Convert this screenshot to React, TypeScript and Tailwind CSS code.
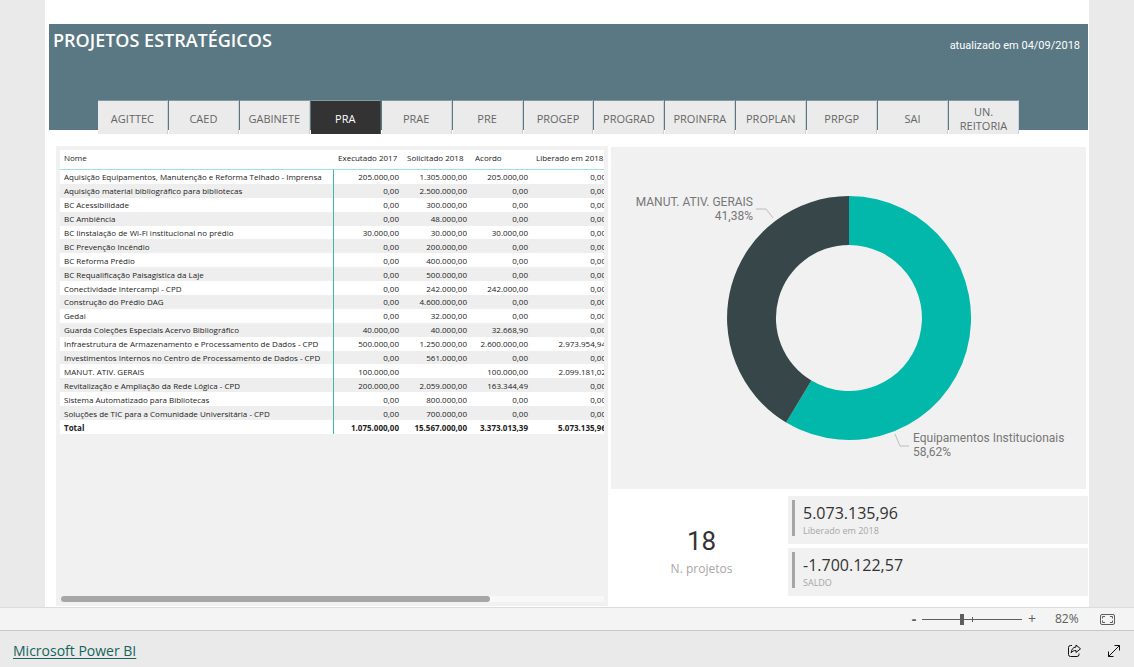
import React, { useState } from 'react'

const tabs = ['AGITTEC', 'CAED', 'GABINETE', 'PRA', 'PRAE', 'PRE', 'PROGEP', 'PROGRAD', 'PROINFRA', 'PROPLAN', 'PRPGP', 'SAI', 'UN. REITORIA']

const columns = ['Nome', 'Executado 2017', 'Solicitado 2018', 'Acordo', 'Liberado em 2018']

const projects = [
    ['Aquisição Equipamentos, Manutenção e Reforma Telhado - Imprensa', '205.000,00', '1.305.000,00', '205.000,00', '0,00'],
    ['Aquisição material bibliográfico para bibliotecas', '0,00', '2.500.000,00', '0,00', '0,00'],
    ['BC Acessibilidade', '0,00', '300.000,00', '0,00', '0,00'],
    ['BC Ambiência', '0,00', '48.000,00', '0,00', '0,00'],
    ['BC Iinstalação de Wi-Fi institucional no prédio', '30.000,00', '30.000,00', '30.000,00', '0,00'],
    ['BC Prevenção Incêndio', '0,00', '200.000,00', '0,00', '0,00'],
    ['BC Reforma Prédio', '0,00', '400.000,00', '0,00', '0,00'],
    ['BC Requalificação Paisagística da Laje', '0,00', '500.000,00', '0,00', '0,00'],
    ['Conectividade Intercampi - CPD', '0,00', '242.000,00', '242.000,00', '0,00'],
    ['Construção do Prédio DAG', '0,00', '4.600.000,00', '0,00', '0,00'],
    ['Gedai', '0,00', '32.000,00', '0,00', '0,00'],
    ['Guarda Coleções Especiais Acervo Bibliográfico', '40.000,00', '40.000,00', '32.668,90', '0,00'],
    ['Infraestrutura de Armazenamento e Processamento de Dados - CPD', '500.000,00', '1.250.000,00', '2.600.000,00', '2.973.954,94'],
    ['Investimentos Internos no Centro de Processamento de Dados - CPD', '0,00', '561.000,00', '0,00', '0,00'],
    ['MANUT. ATIV. GERAIS', '100.000,00', '', '100.000,00', '2.099.181,02'],
    ['Revitalização e Ampliação da Rede Lógica - CPD', '200.000,00', '2.059.000,00', '163.344,49', '0,00'],
    ['Sistema Automatizado para Bibliotecas', '0,00', '800.000,00', '0,00', '0,00'],
    ['Soluções de TIC para a Comunidade Universitária - CPD', '0,00', '700.000,00', '0,00', '0,00'],
]

const total = ['Total', '1.075.000,00', '15.567.000,00', '3.373.013,39', '5.073.135,96']

const Header = () => {

    const [active, setActive] = useState('PRA')

    return (
        <header className="ml-1 mr-px flex h-[106px] flex-col justify-between bg-[#5a7883] text-white">
            <div className="flex items-start justify-between px-1">
                <h1 className="mt-1 text-[18px] leading-6 font-semibold">PROJETOS ESTRATÉGICOS</h1>
                <p className="mt-3 mr-1 font-['Roboto',sans-serif] text-[11px] leading-5">atualizado em 04/09/2018</p>
            </div>

            {/* Tabs */}
            <nav className="-mb-1 ml-[49px] mr-[69px] flex gap-px">
                {tabs.map((tab) => (
                    <button
                        key={tab}
                        onClick={() => setActive(tab)}
                        className={`h-[34px] min-w-0 flex-1 border-t border-r border-t-[#8299a1] px-1 pt-0.5 text-[11px] leading-[14px] ${tab === active ? 'border-r-[#4a5b61] bg-[#333333] text-white' : 'border-r-[#c9d1d4] bg-[#ebebeb] text-[#666666]'}`}
                    >
                        {tab}
                    </button>
                ))}
            </nav>
        </header>
    )
}

const ProjectsTable = () => {
    return (
        <section className="flex min-w-0 flex-col justify-between bg-[#f1f1f1] p-1">
            <div className="overflow-hidden">
                <table className="h-[284px] w-[550px] table-fixed border-separate border-spacing-0 bg-white text-[8px] leading-[13px] text-[#222222]">
                    <colgroup>
                        <col className="w-[274px]" />
                        <col className="w-[69px]" />
                        <col className="w-[68px]" />
                        <col className="w-[61px]" />
                        <col />
                    </colgroup>
                    <thead>
                        <tr className="h-5 text-left whitespace-nowrap">
                            {columns.map((column) => (
                                <th key={column} className="border-b border-[#9fe3db] px-1 pt-0 pb-1 font-normal">{column}</th>
                            ))}
                        </tr>
                    </thead>
                    <tbody>
                        {projects.map((row) => (
                            <tr key={row[0]} className="even:bg-[#eeeeee]">
                                {row.map((cell, index) => (
                                    <td key={index} className={index === 0 ? 'border-r border-[#3bb8ad] px-1 py-0 whitespace-nowrap' : 'px-1 py-0 text-right'}>{cell}</td>
                                ))}
                            </tr>
                        ))}
                        <tr className="font-bold">
                            {total.map((cell, index) => (
                                <td key={index} className={index === 0 ? 'border-r border-[#3bb8ad] px-1 py-0' : 'px-1 py-0 text-right'}>{cell}</td>
                            ))}
                        </tr>
                    </tbody>
                </table>
            </div>

            {/* Horizontal scrollbar */}
            <div className="ml-px h-[6px] rounded-full bg-[#f8f8f8]">
                <div className="h-full w-[79%] rounded-full bg-[#a6a6a6]" />
            </div>
        </section>
    )
}

const Donut = () => {
    return (
        <section className="mr-0.5 bg-[#f1f1f1]">
            <svg viewBox="0 0 475 342" className="h-[342px] w-full font-['Roboto',sans-serif] text-[12px]" role="img" aria-label="Projetos">
                <path d="M238 49A122 122 0 1 1 175.1 275.5L200.4 233.6A73 73 0 1 0 238 98Z" fill="#01b8aa" />
                <path d="M175.1 275.5A122 122 0 0 1 238 49V98A73 73 0 0 0 200.4 233.6Z" fill="#374649" />
                <path d="M145 62H155L162 71M284 287L289 299H298" fill="none" stroke="#bdbdbd" />
                <g fill="#777777">
                    <text x="142" y="59" textAnchor="end">MANUT. ATIV. GERAIS</text>
                    <text x="142" y="73" textAnchor="end">41,38%</text>
                    <text x="302" y="295">Equipamentos Institucionais</text>
                    <text x="302" y="309">58,62%</text>
                </g>
            </svg>
        </section>
    )
}

const Card = ({ value, label }: { value: string; label: string }) => {
    return (
        <div className="h-12 bg-[#f1f1f1] p-1">
            <div className="h-9 border-l-[3px] border-[#a6a6a6] pl-2">
                <p className="pt-0.5 text-[16px] leading-[22px] text-[#333333]">{value}</p>
                <p className="text-[9px] leading-[14px] text-[#a6a6a6]">{label}</p>
            </div>
        </div>
    )
}

const ZoomBar = () => {

    const [zoom, setZoom] = useState(82)

    return (
        <div className="flex h-6 items-center justify-end border-t border-b border-t-[#dcdcdc] border-b-[#c8c8c8] bg-[#f4f4f4] pr-[19px] text-[#605e5c]">
            <button aria-label="Diminuir zoom" onClick={() => setZoom(zoom - 1)} className="w-4 text-sm leading-5 font-bold">-</button>
            <div className="relative h-3 w-[100px]">
                <span className="absolute top-1 left-[50px] h-[5px] w-px bg-[#605e5c]" />
                <input
                    type="range"
                    aria-label="Zoom"
                    min={4}
                    max={200}
                    value={zoom}
                    onChange={(e) => setZoom(Number(e.target.value))}
                    className="relative block h-3 w-full appearance-none bg-transparent [&::-webkit-slider-runnable-track]:h-px [&::-webkit-slider-runnable-track]:bg-[#605e5c] [&::-webkit-slider-thumb]:-mt-[5px] [&::-webkit-slider-thumb]:h-[11px] [&::-webkit-slider-thumb]:w-1 [&::-webkit-slider-thumb]:appearance-none [&::-webkit-slider-thumb]:bg-[#605e5c]"
                />
            </div>
            <button aria-label="Aumentar zoom" onClick={() => setZoom(zoom + 1)} className="w-5 text-sm leading-5">+</button>
            <span className="ml-[13px] w-[45px] text-[12px] leading-5">{zoom}%</span>
            <button aria-label="Ajustar à página">
                <svg width="15" height="11" viewBox="0 0 15 11" fill="none" stroke="currentColor">
                    <rect x="0.5" y="0.5" width="14" height="10" rx="1.5" />
                    <path d="M5 2.5H2.5V4.5M10 2.5H12.5V4.5M5 8.5H2.5V6.5M10 8.5H12.5V6.5" />
                </svg>
            </button>
        </div>
    )
}

const App = () => {
    return (
        <div className="flex min-h-screen flex-col bg-[#eaeaea] font-['Open_Sans',sans-serif]">
            <main className="mx-[45px] flex flex-1 flex-col bg-white pt-6">
                <Header />
                <div className="mt-4 mr-px ml-[11px] grid flex-1 grid-cols-[552fr_477fr] gap-[3px] pb-px">
                    <ProjectsTable />
                    <div className="flex min-w-0 flex-col pt-px">
                        <Donut />
                        <div className="mt-[7px] grid grid-cols-[177fr_300fr]">
                            <div className="flex flex-col items-center justify-center pt-3.5 pl-1">
                                <p className="font-['Roboto',sans-serif] text-[26px] leading-8 text-[#333333]">18</p>
                                <p className="text-[12px] leading-6 text-[#a6a6a6]">N. projetos</p>
                            </div>
                            <div className="flex flex-col gap-1">
                                <Card value="5.073.135,96" label="Liberado em 2018" />
                                <Card value="-1.700.122,57" label="SALDO" />
                            </div>
                        </div>
                    </div>
                </div>
            </main>

            <ZoomBar />

            <footer className="flex h-9 items-center justify-between pt-1 pr-[13px] pl-[13px]">
                <a href="#" className="text-[14px] leading-5 text-[#14645c] underline underline-offset-2">Microsoft Power BI</a>
                <div className="flex items-center gap-[26px] text-[#111111]">
                    <button aria-label="Compartilhar">
                        <svg width="14" height="14" viewBox="0 0 14 14" fill="none" stroke="currentColor" strokeLinejoin="round">
                            <path d="M5 1.500H3.500A2 2 0 0 0 1.500 3.500V10.500A2 2 0 0 0 3.500 12.500H10A2 2 0 0 0 12 10.500V9.500" />
                            <path d="M9 1L13.500 4.800L9 8.500V6.500C6.500 6.500 5.300 7.200 4.200 8.800C4.400 5.500 6 3.200 9 3Z" />
                        </svg>
                    </button>
                    <button aria-label="Tela cheia">
                        <svg width="14" height="14" viewBox="0 0 14 14" fill="none" stroke="currentColor">
                            <path d="M1.500 12.500L12.500 1.500M7.500 1.500H12.500V6.500M1.500 7.500V12.500H6.500" />
                        </svg>
                    </button>
                </div>
            </footer>
        </div>
    )
}

export default App
